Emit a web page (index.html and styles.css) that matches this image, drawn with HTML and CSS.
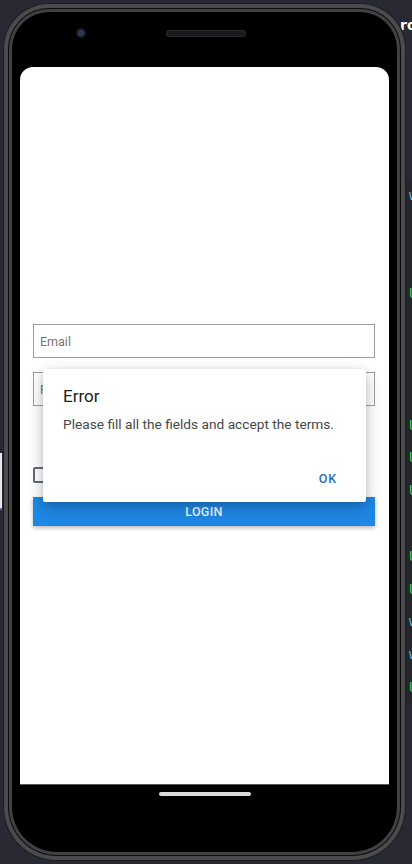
FILE: index.html
```html
<!DOCTYPE html>
<html lang="en">
<head>
<meta charset="utf-8">
<title>Login</title>
<link rel="stylesheet" href="styles.css">
</head>
<body>
  <div class="editor">
    <div class="title">ro</div>
    <div class="lines">
      <div class="ln blue">w</div>
      <div class="ln"></div>
      <div class="ln"></div>
      <div class="ln green">U</div>
      <div class="ln"></div>
      <div class="ln"></div>
      <div class="ln"></div>
      <div class="ln green">U</div>
      <div class="ln green">U</div>
      <div class="ln green">U</div>
      <div class="ln"></div>
      <div class="ln green">U</div>
      <div class="ln green">U</div>
      <div class="ln blue">w</div>
      <div class="ln blue">w</div>
      <div class="ln green">U</div>
    </div>
  </div>
  <div class="side-left"><div class="side-white"></div></div>

  <div class="phone">
    <div class="bezel-top">
      <span class="camera"></span>
      <span class="speaker"></span>
    </div>
    <div class="screen">
      <form class="form">
        <div class="input"><span class="placeholder">Email</span></div>
        <div class="input"><span class="placeholder">Password</span></div>
        <div class="check-row"><span class="checkbox"></span></div>
        <div class="btn-login">LOGIN</div>
      </form>
      <div class="dialog">
        <div class="dialog-title">Error</div>
        <div class="dialog-msg">Please fill all the fields and accept the terms.</div>
        <div class="dialog-actions"><span class="btn-ok">OK</span></div>
      </div>
    </div>
    <div class="bezel-bottom"><span class="home"></span></div>
  </div>
</body>
</html>
```
FILE: styles.css
```css
* { box-sizing: border-box; }
html, body { margin: 0; padding: 0; }
body {
  width: 412px;
  height: 864px;
  overflow: hidden;
  background: #282933;
  display: grid;
  grid-template-columns: 1fr;
  grid-template-rows: 1fr;
  font-family: Roboto, "Liberation Sans", sans-serif;
}

/* background editor window on the right */
.editor {
  grid-area: 1 / 1;
  justify-self: end;
  width: 14px;
  height: 864px;
  overflow: hidden;
  padding-top: 17px;
  padding-left: 2px;
}
.editor .title {
  color: #ffffff;
  font: 700 14px "DejaVu Sans", sans-serif;
  line-height: 16px;
  white-space: nowrap;
}
.editor .lines {
  margin-top: 146px;
  padding-left: 9px;
  background: #25262c;
}
.editor .ln {
  height: 32.8px;
  font: 400 14px "DejaVu Sans Mono", monospace;
  line-height: 32.8px;
}
.editor .green { color: #47c35a; }
.editor .blue { color: #5ab2dc; }

.side-left {
  grid-area: 1 / 1;
  justify-self: start;
  width: 3px;
  height: 864px;
  padding-top: 453px;
}
.side-white { width: 2px; height: 57px; background: #e8e8ea; border-bottom: 2px solid #7a5cc8; }

/* phone */
.phone {
  grid-area: 1 / 1;
  justify-self: start;
  align-self: start;
  z-index: 1;
  margin: 3px 0 0 3px;
  width: 403px;
  height: 858px;
  background: #000;
  border-radius: 46px 46px 54px 54px;
  box-shadow:
    inset 0 0 0 1px #1d1d20,
    inset 0 0 0 5px #4b4b4e,
    inset 0 0 0 6px #0c0c0c,
    inset 0 0 0 9px #414144,
    inset 0 0 0 10px #000;
  display: flex;
  flex-direction: column;
}
.bezel-top {
  height: 64px;
  display: flex;
  align-items: flex-start;
  padding: 25px 0 0 73px;
}
.camera {
  width: 10px;
  height: 10px;
  border-radius: 50%;
  background: radial-gradient(circle at 50% 50%, #2b3550 0 35%, #141824 60%, #1e1e22 100%);
}
.speaker {
  margin: 2px 0 0 80px;
  width: 80px;
  height: 7px;
  border-radius: 4px;
  background: #1a1a1c;
  box-shadow: inset 0 0 0 1px #2a2a2c;
}
.screen {
  position: relative;
  margin: 0 17px;
  height: 717px;
  background: #fff;
  border-radius: 13px 13px 0 0;
  box-shadow: 0 1px 0 #5a5a5a;
}
.bezel-bottom {
  display: flex;
  justify-content: center;
  padding-top: 8px;
}
.home {
  width: 92px;
  height: 4px;
  border-radius: 2px;
  background: #dcdcdc;
}

/* form */
.form {
  display: flex;
  flex-direction: column;
  padding: 257px 14px 0 13px;
  margin: 0;
}
.input {
  height: 34px;
  border: 1px solid #9e9e9e;
  display: flex;
  align-items: center;
  padding-left: 6px;
  margin-bottom: 14px;
}
.placeholder {
  font-size: 12.5px;
  color: #757575;
}
.check-row {
  margin-top: 46px;
  height: 17px;
  display: flex;
  align-items: center;
}
.checkbox {
  width: 16px;
  height: 16px;
  border: 2px solid #5f6a74;
  border-radius: 2px;
}
.btn-login {
  margin-top: 14px;
  height: 29px;
  background: #1e88e5;
  color: #eef5fc;
  font-size: 12.5px;
  font-weight: 500;
  letter-spacing: 0.3px;
  display: flex;
  align-items: center;
  justify-content: center;
  box-shadow: 0 2px 4px rgba(0,0,0,0.28);
}

/* dialog */
.dialog {
  position: absolute;
  left: 23px;
  top: 302px;
  width: 323px;
  height: 133px;
  background: #fff;
  border-radius: 2px;
  box-shadow: 0 6px 18px rgba(0,0,0,0.22), 0 2px 6px rgba(0,0,0,0.12);
  display: flex;
  flex-direction: column;
  padding: 17px 20px 0 20px;
}
.dialog-title {
  font-size: 17px;
  line-height: 20px;
  color: #202020;
}
.dialog-msg {
  margin-top: 8px;
  font-size: 13.7px;
  line-height: 20px;
  color: #474747;
  white-space: nowrap;
}
.dialog-actions {
  margin-top: auto;
  display: flex;
  justify-content: flex-end;
  padding: 0 9px 15px 0;
}
.btn-ok {
  font-size: 12.5px;
  line-height: 16px;
  font-weight: 500;
  letter-spacing: 0.9px;
  color: #1f6fb8;
}
```
